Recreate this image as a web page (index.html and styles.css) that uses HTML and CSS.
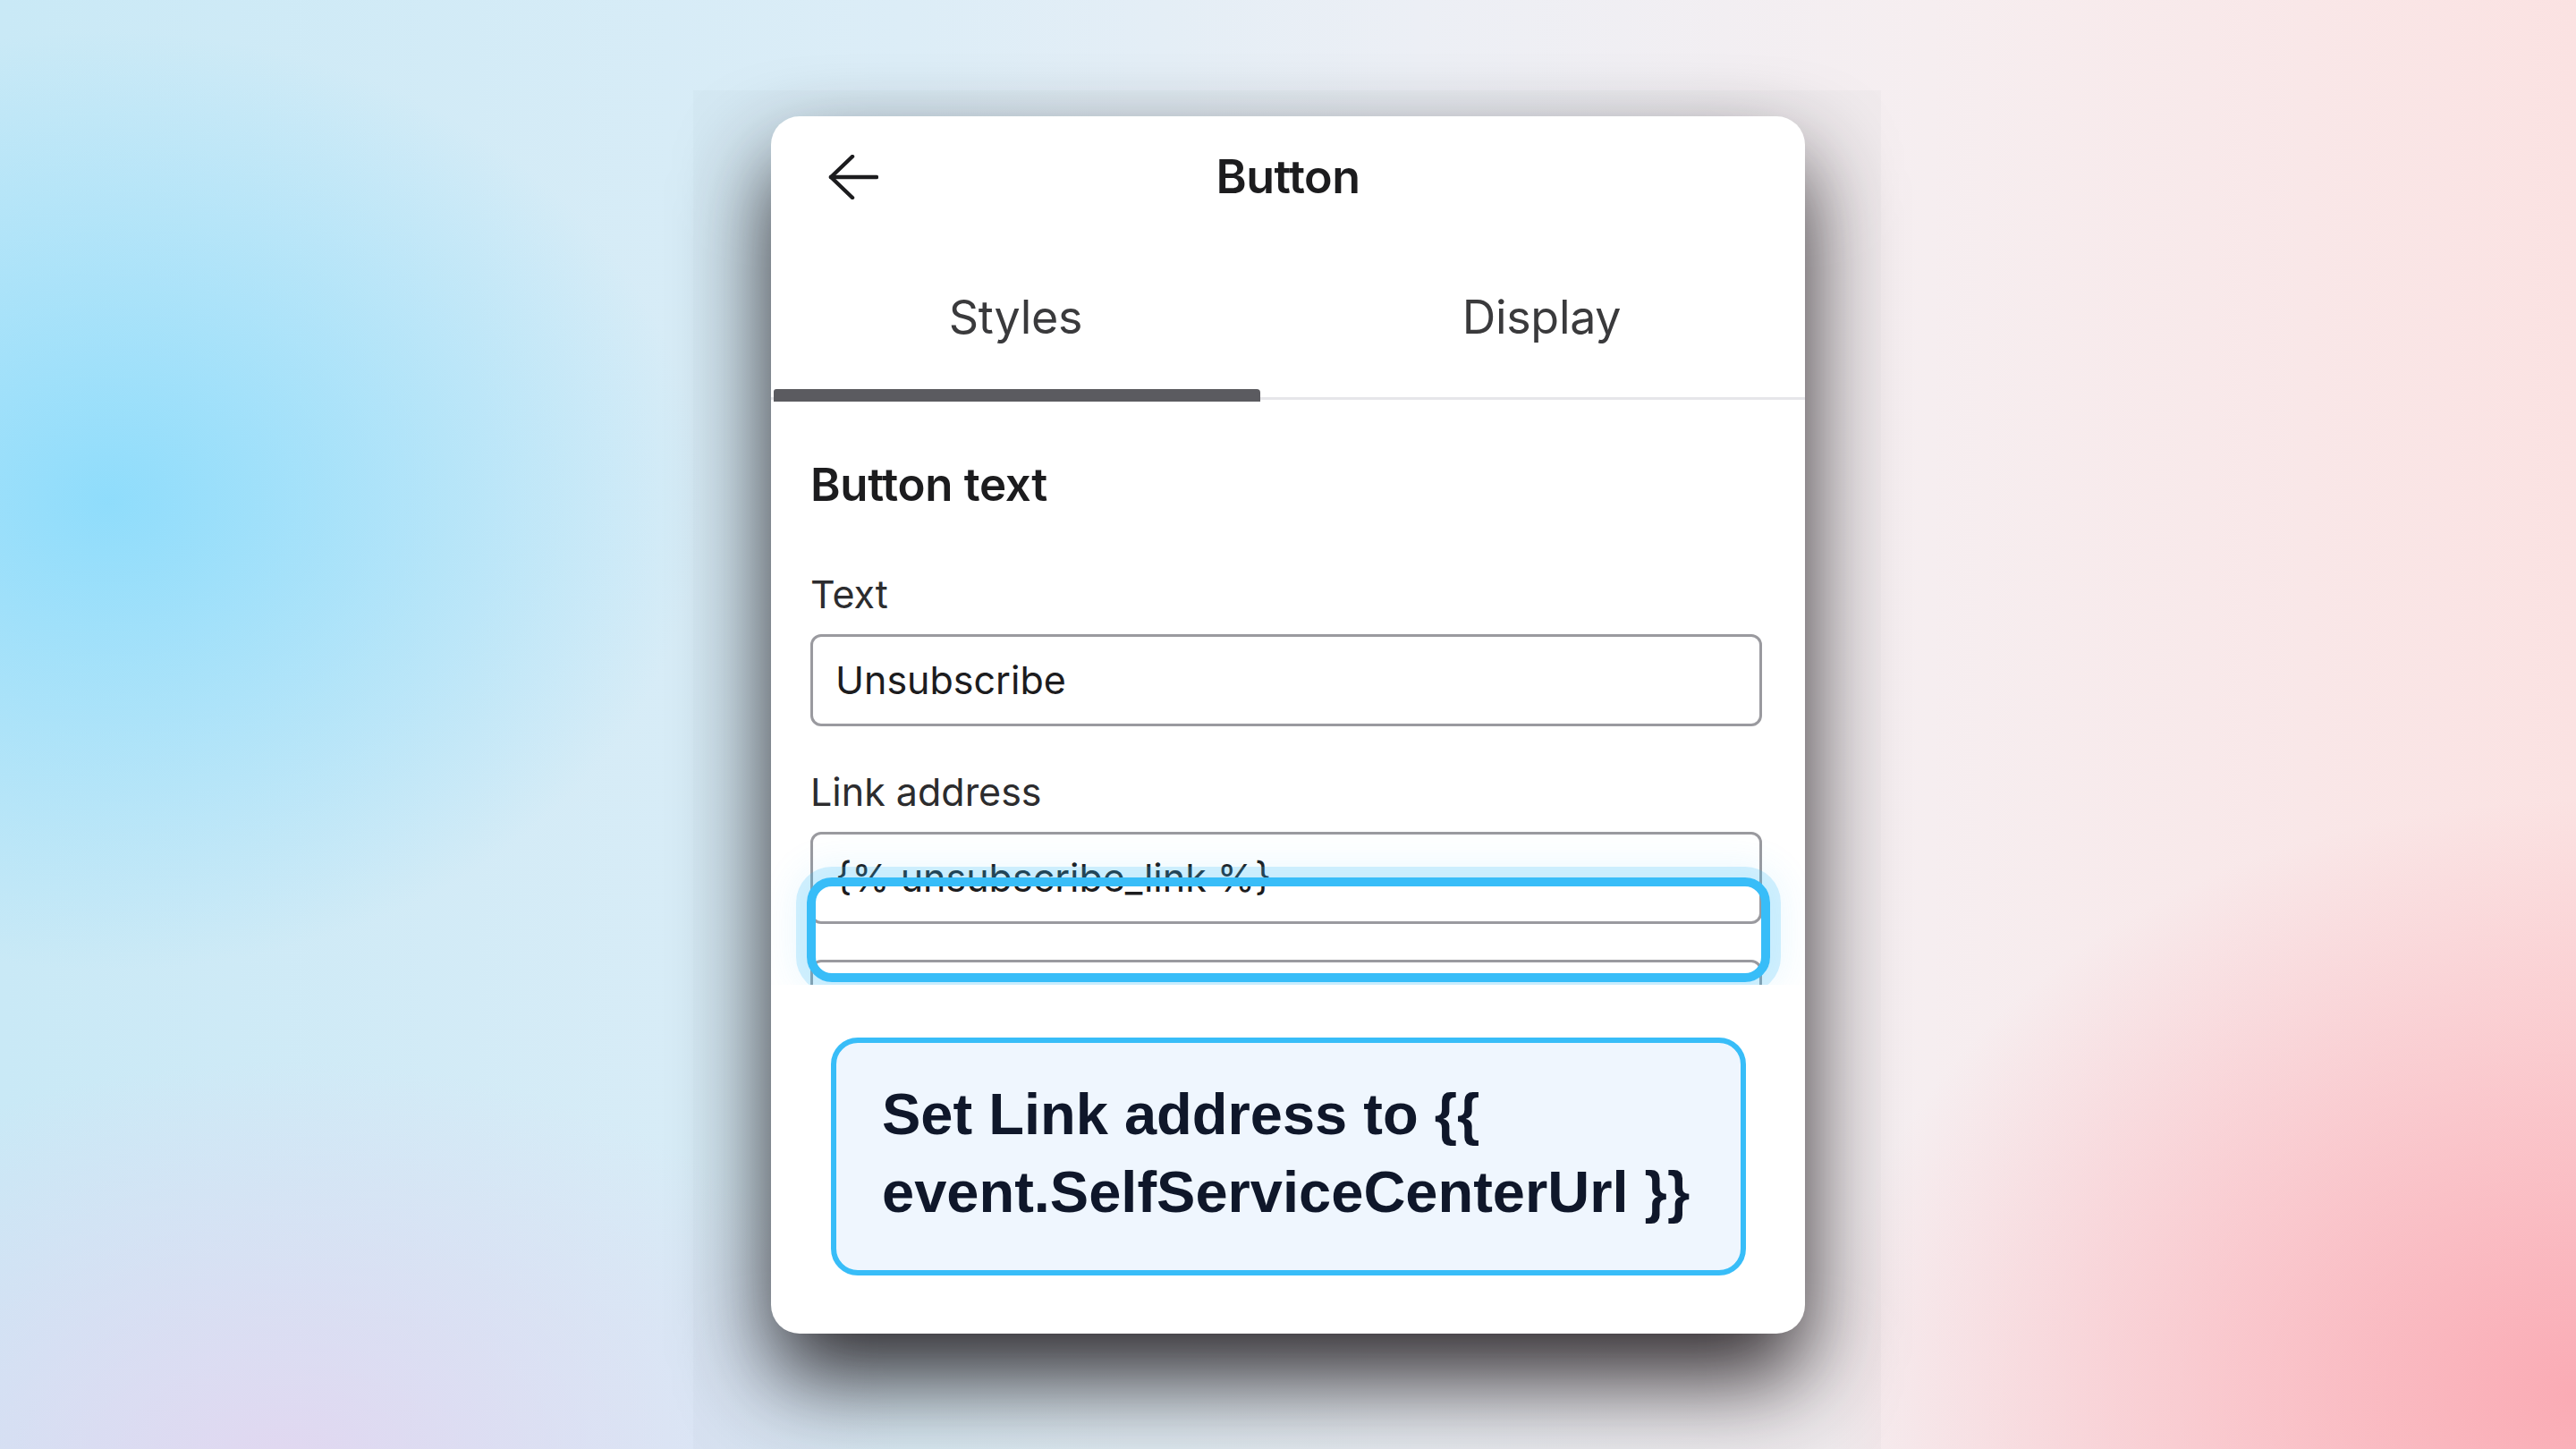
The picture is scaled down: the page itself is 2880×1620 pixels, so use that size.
FILE: index.html
```html
<!DOCTYPE html>
<html lang="en">
<head>
    <meta charset="UTF-8">
    <meta name="viewport" content="width=device-width, initial-scale=1.0">
    <title>Button settings</title>
    <link rel="stylesheet" href="styles.css">
</head>
<body>
    <main class="stage">
        <div class="backdrop"></div>
        <section class="panel">
            <div class="shot">
                <header class="bar">
                    <span class="back">
                        <svg width="56" height="50" viewBox="0 0 56 50" fill="none" stroke="#1c1c1e" stroke-width="4.5" stroke-linecap="round" stroke-linejoin="round">
                            <path d="M54 25H3"/>
                            <path d="M27 2L3 25L27 48"/>
                        </svg>
                    </span>
                    <h1>Button</h1>
                    <span></span>
                </header>

                <nav class="tabs">
                    <span class="tab active">Styles</span>
                    <span class="tab second">Display</span>
                </nav>

                <div class="form">
                    <h2>Button text</h2>
                    <div class="field-label">Text</div>
                    <div class="input">Unsubscribe</div>
                    <div class="field-label link">Link address</div>
                    <div class="input">{% unsubscribe_link %}</div>
                    <div class="input next"></div>
                </div>

                <div class="highlight"></div>
            </div>

            <div class="callout">
                Set Link address to {{ event.SelfServiceCenterUrl }}
            </div>
        </section>
    </main>
</body>
</html>
```

FILE: styles.css
```css
html, body {
    margin: 0;
    padding: 0;
}

body {
    font-family: Inter, 'Noto Sans', sans-serif;
    background:
        radial-gradient(ellipse 950px 750px at 120px 560px, rgba(140, 220, 252, 0.95), rgba(140, 220, 252, 0) 70%),
        radial-gradient(ellipse 1200px 950px at 2880px 1560px, rgba(250, 168, 178, 0.95), rgba(250, 168, 178, 0) 70%),
        radial-gradient(ellipse 1000px 650px at 320px 1640px, rgba(226, 214, 240, 0.95), rgba(226, 214, 240, 0) 70%),
        linear-gradient(to right, #c9e9f6 0%, #dcedf7 35%, #eceff5 55%, #f6eef0 75%, #fbe2e2 100%);
    min-height: 100vh;
    overflow: hidden;
}

.stage {
    position: relative;
    height: 100vh;
    display: flex;
    align-items: center;
    justify-content: center;
}

.backdrop {
    position: absolute;
    left: 775px;
    top: 101px;
    width: 1328px;
    bottom: 0;
    background: rgba(110, 130, 140, 0.035);
}

.panel {
    position: relative;
    width: 1156px;
    height: 1361px;
    background: #fff;
    border-radius: 32px;
    overflow: hidden;
    box-shadow: 0 50px 100px rgba(28, 22, 25, 0.9);
}

.shot {
    position: relative;
    height: 971px;
    overflow: hidden;
}

.bar {
    height: 136px;
    display: grid;
    grid-template-columns: 1fr auto 1fr;
    align-items: center;
}

.back {
    padding-left: 64px;
    display: flex;
}

h1 {
    margin: 0;
    font-size: 52px;
    line-height: 62px;
    font-weight: 600;
    color: #1c1c1e;
    letter-spacing: -0.5px;
}

.tabs {
    display: flex;
    height: 183px;
    background: linear-gradient(#e6e6ea, #e6e6ea) left bottom 2px / 100% 3px no-repeat;
}

.tab {
    position: relative;
    box-sizing: border-box;
    padding-top: 58px;
    line-height: 62px;
    font-size: 52px;
    color: #3a3a3c;
    text-align: center;
    letter-spacing: -0.3px;
}

.tab.active {
    width: 547px;
}

.tab.active::after {
    content: "";
    position: absolute;
    left: 3px;
    right: 0;
    bottom: 0;
    height: 14px;
    background: #5b5b60;
    border-radius: 3px 4px 0 0;
}

.tab.second {
    flex: 1;
    padding-left: 20px;
}

.form {
    padding: 0 48px 0 44px;
}

h2 {
    margin: 62px 0 0;
    font-size: 51px;
    line-height: 62px;
    font-weight: 600;
    color: #1c1c1e;
    letter-spacing: -0.3px;
}

.field-label {
    margin-top: 65px;
    font-size: 43px;
    line-height: 52px;
    color: #2c2c2e;
}

.field-label.link {
    margin-top: 47px;
}

.input {
    margin-top: 19px;
    height: 103px;
    box-sizing: border-box;
    border: 3px solid #9a9a9f;
    border-radius: 12px;
    padding: 0 25px;
    display: flex;
    align-items: center;
    font-size: 43px;
    color: #1c1c1e;
}

.input.next {
    margin-top: 40px;
}

.highlight {
    position: absolute;
    left: 40px;
    top: 851px;
    width: 1077px;
    height: 117px;
    box-sizing: border-box;
    border: 10px solid #38bdf8;
    border-radius: 28px;
    box-shadow: 0 0 0 12px rgba(56, 189, 248, 0.21), 0 0 40px 14px rgba(56, 189, 248, 0.1);
}

.callout {
    margin: 59px 66px 0 67px;
    border: 6px solid #38bdf8;
    border-radius: 30px;
    background: #eff6fe;
    padding: 36px 40px 44px 51px;
    font-family: 'Liberation Sans', Arial, sans-serif;
    font-weight: 700;
    font-size: 65px;
    line-height: 87px;
    color: #0f172a;
}
```
